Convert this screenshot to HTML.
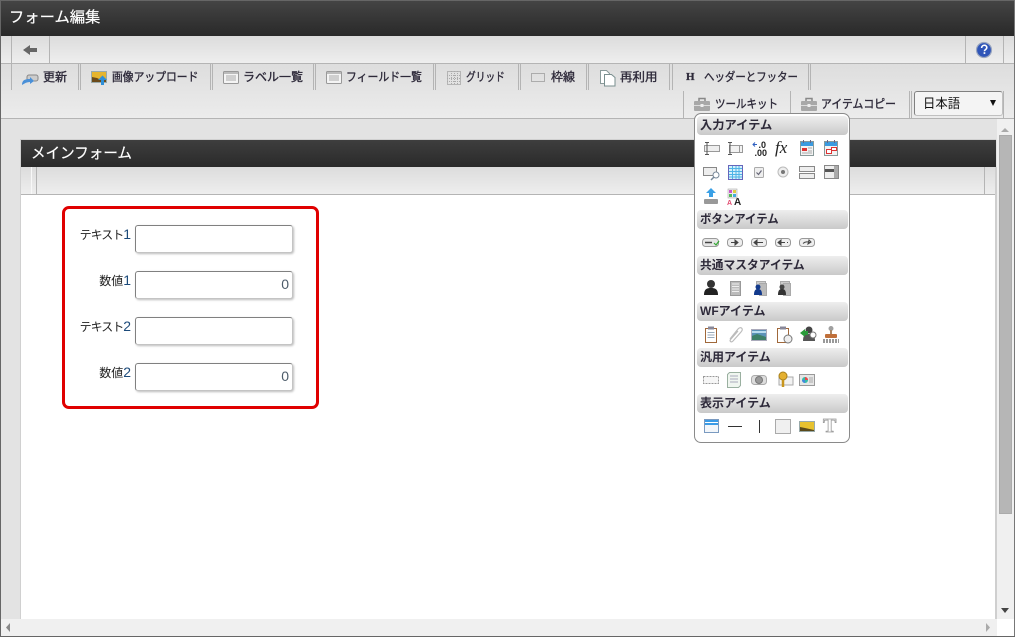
<!DOCTYPE html>
<html lang="ja"><head><meta charset="utf-8"><title>フォーム編集</title>
<style>
html,body{margin:0;padding:0;width:1015px;height:637px;overflow:hidden;background:#e3e3e3}
body{position:relative;font-family:"Liberation Sans","Noto Sans CJK JP",sans-serif}
div,span,svg{position:absolute;box-sizing:border-box}
.b{background:#b4b4b4}
.w{background:#f8f8f8}
.t{font-size:12px;line-height:16px;color:#2e2a3a;white-space:nowrap;transform-origin:0 50%;-webkit-text-stroke:.35px #2e2a3a}
.h{left:697px;width:151px;height:19px;background:linear-gradient(#eeeeee,#c9c9c9);border-radius:4px}
.h span{left:3px;top:1px;font-size:12px;line-height:17px;font-weight:bold;color:#2e2a3a;white-space:nowrap;transform-origin:0 50%}
.l{width:70px;left:61px;text-align:right;font-size:12px;line-height:16px;color:#222;white-space:nowrap}
.l i{font-style:normal;position:static;letter-spacing:-1px}
.l b{font-weight:normal;color:#1c4a7a;font-size:14px;line-height:16px}
.i{left:135px;width:158px;height:28px;background:#fff;border:1px solid #c4c4c4;border-top-color:#808080;border-left-color:#808080;border-radius:3px;box-shadow:1px 1px 2px #bbb}
.i span{right:3px;top:4px;font-size:14px;line-height:16px;color:#4d5c6a}
</style></head><body>
<!-- title bar -->
<div style="left:0;top:0;width:1015px;height:36px;background:linear-gradient(#444,#292929);border-top:1px solid #666"></div>
<span style="left:9px;top:8px;font-size:15px;line-height:20px;color:#fff;white-space:nowrap;transform:scaleX(1.02);transform-origin:0 50%;-webkit-text-stroke:.2px #fff">フォーム編集</span>
<!-- toolbar row -->
<div style="left:0;top:36px;width:1015px;height:27px;background:linear-gradient(#dcdcdc,#eeeeee)"></div>
<div style="left:0;top:63px;width:1015px;height:56px;background:linear-gradient(#dddddd,#ececec)"></div>
<div class="b" style="left:0;top:63px;width:1015px;height:1px"></div>
<div class="b" style="left:0;top:118px;width:1015px;height:1px"></div>
<div class="b" style="left:11px;top:36px;width:1px;height:27px"></div>
<div class="b" style="left:49px;top:36px;width:1px;height:27px"></div>
<div class="b" style="left:965px;top:36px;width:1px;height:27px"></div>
<div class="b" style="left:1003px;top:36px;width:1px;height:27px"></div>
<!-- tab separators row 1 -->
<div class="b" style="left:11px;top:64px;width:1px;height:26px"></div>
<div class="b" style="left:78px;top:64px;width:1px;height:26px"></div><div class="b" style="left:80px;top:64px;width:1px;height:26px"></div>
<div class="b" style="left:210px;top:64px;width:1px;height:26px"></div><div class="b" style="left:212px;top:64px;width:1px;height:26px"></div>
<div class="b" style="left:313px;top:64px;width:1px;height:26px"></div><div class="b" style="left:315px;top:64px;width:1px;height:26px"></div>
<div class="b" style="left:433px;top:64px;width:1px;height:26px"></div><div class="b" style="left:435px;top:64px;width:1px;height:26px"></div>
<div class="b" style="left:518px;top:64px;width:1px;height:26px"></div><div class="b" style="left:520px;top:64px;width:1px;height:26px"></div>
<div class="b" style="left:586px;top:64px;width:1px;height:26px"></div><div class="b" style="left:588px;top:64px;width:1px;height:26px"></div>
<div class="b" style="left:669px;top:64px;width:1px;height:26px"></div><div class="b" style="left:672px;top:64px;width:1px;height:26px"></div>
<div class="b" style="left:808px;top:64px;width:1px;height:26px"></div><div class="b" style="left:810px;top:64px;width:1px;height:26px"></div>
<!-- row 2 separators -->
<div class="b" style="left:683px;top:91px;width:1px;height:27px"></div>
<div class="b" style="left:790px;top:91px;width:1px;height:27px"></div>
<div class="b" style="left:909px;top:91px;width:1px;height:27px"></div><div class="b" style="left:911px;top:91px;width:1px;height:27px"></div>
<div class="b" style="left:1003px;top:91px;width:1px;height:27px"></div>
<!-- toolbar labels -->
<span class="t" style="left:43px;top:69px">更新</span>
<span class="t" style="left:112px;top:69px;transform:scaleX(.9)">画像アップロード</span>
<span class="t" style="left:243px;top:69px">ラベル一覧</span>
<span class="t" style="left:346px;top:69px;transform:scaleX(.905)">フィールド一覧</span>
<span class="t" style="left:466px;top:69px;transform:scaleX(.81)">グリッド</span>
<span class="t" style="left:551px;top:69px">枠線</span>
<span class="t" style="left:620px;top:69px;transform:scaleX(1.04)">再利用</span>
<span class="t" style="left:686px;top:69px;font-family:'Liberation Serif',serif;font-weight:bold;font-size:11px">H</span>
<span class="t" style="left:704px;top:69px;transform:scaleX(.87)">ヘッダーとフッター</span>
<span class="t" style="left:715px;top:96px;transform:scaleX(.875)">ツールキット</span>
<span class="t" style="left:821px;top:96px;transform:scaleX(.905)">アイテムコピー</span>
<!-- language select -->
<div style="left:914px;top:91px;width:89px;height:25px;background:#f4f4f4;border:1px solid #c0c0c0;border-top-color:#808080;border-left-color:#808080;border-radius:3px"></div>
<span style="left:923px;top:94px;font-size:13px;line-height:18px;color:#111;white-space:nowrap;font-family:'Noto Sans CJK JP',sans-serif;transform:scaleX(.95);transform-origin:0 50%">日本語</span>
<!-- content panel -->
<div style="left:0;top:119px;width:997px;height:500px;background:#e3e3e3"></div>
<div style="left:20px;top:139px;width:976px;height:1px;background:#d0d0d0"></div>
<div style="left:20px;top:139px;width:1px;height:480px;background:#d0d0d0"></div>
<div style="left:21px;top:140px;width:975px;height:27px;background:linear-gradient(#3e3e3e,#2a2a2a)"></div>
<span style="left:31px;top:144px;font-size:15px;line-height:20px;color:#fff;white-space:nowrap;transform:scaleX(.97);transform-origin:0 50%;-webkit-text-stroke:.2px #fff">メインフォーム</span>
<div style="left:21px;top:167px;width:975px;height:27px;background:linear-gradient(#dcdcdc,#eeeeee)"></div>
<div class="w" style="left:31px;top:167px;width:1px;height:27px"></div>
<div class="b" style="left:36px;top:167px;width:1px;height:27px"></div>
<div class="b" style="left:984px;top:167px;width:1px;height:27px"></div>
<div class="b" style="left:21px;top:194px;width:975px;height:1px"></div>
<div style="left:21px;top:195px;width:974px;height:424px;background:#fff"></div>
<div style="left:995px;top:167px;width:2px;height:452px;background:#cfcfcf"></div>
<!-- red form box -->
<div style="left:62px;top:206px;width:257px;height:203px;border:3px solid #e00000;border-radius:7px"></div>
<span class="l" style="top:226px"><i>テキスト</i><b>1</b></span>
<span class="l" style="top:272px">数値<b>1</b></span>
<span class="l" style="top:318px"><i>テキスト</i><b>2</b></span>
<span class="l" style="top:364px">数値<b>2</b></span>
<div class="i" style="top:225px"></div>
<div class="i" style="top:271px"><span>0</span></div>
<div class="i" style="top:317px"></div>
<div class="i" style="top:363px"><span>0</span></div>
<!-- scrollbars -->
<div style="left:997px;top:119px;width:18px;height:500px;background:#f0f0f0"></div>
<div style="left:999px;top:135px;width:13px;height:379px;background:#b6b6b6;border:1px solid #ababab"></div>
<div style="left:0;top:619px;width:997px;height:17px;background:#f0f0f0"></div>
<div style="left:997px;top:619px;width:18px;height:17px;background:#fff"></div>
<!-- frame -->
<div style="left:0;top:0;width:1px;height:637px;background:#666"></div>
<div style="left:1014px;top:0;width:1px;height:637px;background:#777"></div>
<div style="left:0;top:636px;width:1015px;height:1px;background:#666"></div>
<!-- palette -->
<div style="left:694px;top:113px;width:156px;height:330px;background:#fff;border:1px solid #8a8a8a;border-radius:7px"></div>
<div class="h" style="top:116px"><span style="transform:scaleX(1.02)">入力アイテム</span></div>
<div class="h" style="top:210px"><span style="transform:scaleX(.95)">ボタンアイテム</span></div>
<div class="h" style="top:256px"><span style="transform:scaleX(.98)">共通マスタアイテム</span></div>
<div class="h" style="top:302px"><span>WFアイテム</span></div>
<div class="h" style="top:348px"><span>汎用アイテム</span></div>
<div class="h" style="top:394px"><span>表示アイテム</span></div>
<span style="left:775px;top:138px;font:italic 17px/20px 'Liberation Serif',serif;color:#222;white-space:nowrap">fx</span>
<span style="left:823px;top:416px;font:bold 20px/20px 'Liberation Serif',serif;color:#fff;-webkit-text-stroke:.8px #999">T</span>
<span style="left:752px;top:141px;font:bold 9px/8px 'Liberation Sans',sans-serif;color:#222;white-space:pre;text-align:right;width:14px">.0</span>
<span style="left:752px;top:149px;font:bold 9px/8px 'Liberation Sans',sans-serif;color:#222;text-align:right;width:15px">.00</span>
<span style="left:734px;top:198px;font:bold 10px/10px 'Liberation Sans',sans-serif;color:#222">A</span>
<span style="left:727px;top:200px;font:bold 7px/8px 'Liberation Sans',sans-serif;color:#e24b70">A</span>
<!-- icons -->
<svg style="left:0;top:0" width="1015" height="637" viewBox="0 0 1015 637" fill="none">
<!-- back arrow -->
<path d="M23 50l7-5v3h7v4h-7v3z" fill="#666"/>
<!-- help -->
<circle cx="984" cy="50" r="7.5" fill="#2f55b8" stroke="#9aa6bf" stroke-width="1.2"/>
<path d="M981.6 48c.2-3.6 5.2-3.6 5.2-.4 0 2-2.4 2-2.4 3.6" stroke="#fff" stroke-width="1.6"/><rect x="983.6" y="52.2" width="1.7" height="1.7" fill="#fff"/>
<!-- update -->
<rect x="27" y="75" width="11" height="6" rx="2" fill="#ccc" stroke="#888"/>
<path d="M22 85c0-5 3-6 8-6v-2l4 4-4 3v-2c-3 0-5 1-8 3z" fill="#4a90d8"/>
<!-- image upload -->
<rect x="91.500" y="71.500" width="15" height="11" fill="#e5b52e" stroke="#9aa"/><path d="M92 77l5 1 4 2 5 0v2H92z" fill="#6b4a1a"/>
<path d="M101 85v-5h-3l4.500-4.500L107 80h-3v5z" fill="#2d8fd8"/>
<!-- list icons -->
<rect x="223.500" y="71.500" width="15" height="12" rx="1" fill="#f4f4f4" stroke="#999"/><rect x="224" y="72" width="14" height="2" fill="#bbb"/><path d="M226 76h10M226 78h10M226 80h10" stroke="#aaa"/>
<rect x="326.500" y="71.500" width="15" height="12" rx="1" fill="#f4f4f4" stroke="#999"/><rect x="327" y="72" width="14" height="2" fill="#bbb"/><path d="M329 76h10M329 78h10M329 80h10" stroke="#aaa"/>
<!-- grid -->
<rect x="447.500" y="71.500" width="13" height="13" stroke="#888" stroke-dasharray="1 1"/><path d="M447 75.500h14M447 78.500h14M447 81.500h14M451.500 71v14M454.500 71v14M457.500 71v14" stroke="#aaa" stroke-dasharray="1 1"/>
<!-- border -->
<rect x="531.500" y="73.500" width="13" height="8" stroke="#777" stroke-dasharray="1 1"/>
<!-- reuse -->
<path d="M600.500 70.500h6l3 3v10h-9z" fill="#fff" stroke="#8a9a9a"/><path d="M604.500 74.500h7l3.500 3v8.500h-10.500z" fill="#fff" stroke="#7a8f8f"/>
<!-- toolboxes -->
<rect x="694" y="101" width="16" height="10" rx="1" fill="#a8a8a8"/><rect x="694" y="105" width="16" height="1" fill="#ddd"/><path d="M699 101v-2.500h6V101" stroke="#888" stroke-width="1.500"/><rect x="700.500" y="104" width="3" height="3" fill="#eee"/>
<rect x="801" y="101" width="16" height="10" rx="1" fill="#a8a8a8"/><rect x="801" y="105" width="16" height="1" fill="#ddd"/><path d="M806 101v-2.500h6V101" stroke="#888" stroke-width="1.500"/><rect x="807.500" y="104" width="3" height="3" fill="#eee"/>
<!-- select arrow -->
<path d="M990 100h6l-3 6z" fill="#111"/>
<!-- scroll arrows -->
<path d="M1001 132l4-4 4 4z" fill="#aaa"/>
<path d="M1001 608h8l-4 5z" fill="#444"/>
<path d="M986 623v9l4-4.500z" fill="#aaa"/>
<path d="M10 623v9l-4-4.500z" fill="#888"/>
<!-- row 1 -->
<rect x="704.500" y="145.500" width="15" height="6" fill="#eee" stroke="#999"/><path d="M705 142.500h4M705 154.500h4M707 142.500v12" stroke="#555"/>
<rect x="729.500" y="145.500" width="13" height="7" fill="#f2f2f2" stroke="#999"/><path d="M728 142.500h4M728 154.500h4M730 142.500v12" stroke="#555"/><path d="M739.500 145v8" stroke="#999"/>
<path d="M753 144.500h4M755 142.500l-2 2 2 2" stroke="#2e5fc0"/>
<rect x="800.500" y="141.500" width="13" height="14" fill="#f3f3f3" stroke="#8a9a9a"/><rect x="801" y="142" width="12" height="4" fill="#3a9be0"/><path d="M803.500 140v3M810.500 140v3" stroke="#668"/><rect x="802" y="148" width="5" height="3" fill="#d33"/><path d="M808 148h4M808 151h4M802 153h10" stroke="#aaa"/>
<rect x="824.500" y="141.500" width="13" height="14" fill="#f3f3f3" stroke="#8a9a9a"/><rect x="825" y="142" width="12" height="4" fill="#3a9be0"/><path d="M827.500 140v3M834.500 140v3" stroke="#668"/><path d="M826.500 149.500h5v4h-5zM831.500 147.500h5v3h-5z" stroke="#d33" fill="#fff"/>
<!-- row 2 -->
<rect x="703.500" y="167.500" width="13" height="8" fill="#eee" stroke="#888"/><circle cx="716" cy="175" r="3" fill="#fff" stroke="#789"/><path d="M714 177l-3 3" stroke="#789" stroke-width="1.500"/>
<rect x="728.500" y="165.500" width="14" height="14" fill="#d6f0fb" stroke="#66b"/><path d="M729 168.500h13M729 171.500h13M729 174.500h13M729 177h13M732.500 166v13M736 166v13M739 166v13" stroke="#4fb4e6"/>
<rect x="754.500" y="167.500" width="9" height="10" rx="1" fill="#eee" stroke="#aaa"/><path d="M756.500 172.500l2 2 3-4" stroke="#667" stroke-width="1.200"/>
<circle cx="783" cy="172" r="5" fill="#eee" stroke="#bbb"/><circle cx="783" cy="172" r="2" fill="#777"/>
<rect x="799.500" y="166.500" width="15" height="5" fill="#eee" stroke="#888"/><rect x="799.500" y="173.500" width="15" height="5" fill="#eee" stroke="#888"/>
<rect x="824.500" y="165.500" width="14" height="13" fill="#eee" stroke="#888"/><rect x="825" y="169" width="9" height="3" fill="#555"/><rect x="834" y="166" width="4" height="12" fill="#aaa"/>
<!-- row 3 -->
<path d="M711 188l5 5h-3v4h-4v-4h-3z" fill="#3aa0e6"/><rect x="704" y="199" width="14" height="5" rx="1" fill="#999"/>
<rect x="728" y="189" width="9" height="9" fill="#eee" stroke="#aaa" stroke-width=".6"/><rect x="729" y="190" width="3" height="3" fill="#c5c"/><rect x="733" y="190" width="3" height="3" fill="#dc4"/><rect x="729" y="194" width="3" height="3" fill="#5b5"/><rect x="733" y="194" width="3" height="3" fill="#4ad"/>
<!-- buttons -->
<rect x="702.500" y="238.500" width="16" height="8" rx="3" fill="#e6e6e6" stroke="#999"/><path d="M705 242.500h7" stroke="#444" stroke-width="1.500"/><path d="M714 243l2 2 3-4" stroke="#3a3" stroke-width="1.200"/>
<rect x="727.500" y="238.500" width="15" height="8" rx="3" fill="#eee" stroke="#999"/><path d="M731 242.500h6M735 240l3 2.500-3 2.500z" stroke="#444" fill="#444"/>
<rect x="751.500" y="238.500" width="15" height="8" rx="3" fill="#eee" stroke="#999"/><path d="M756 242.500h7M757 240l-3 2.500 3 2.500z" stroke="#444" fill="#444"/>
<rect x="775.500" y="238.500" width="15" height="8" rx="3" fill="#eee" stroke="#999"/><path d="M780 242.500h5M781 240l-3 2.500 3 2.500zM787 242.500h1" stroke="#444" fill="#444"/>
<rect x="799.500" y="238.500" width="15" height="8" rx="3" fill="#eee" stroke="#999"/><path d="M803 243.500c2-2 5-2 7-1M809 240l2 2-3 2z" stroke="#444" fill="none"/>
<!-- master -->
<circle cx="711" cy="284" r="4" fill="#333"/><path d="M704 295c0-6 3-7 7-7s7 1 7 7z" fill="#222"/>
<rect x="730.500" y="281.500" width="10" height="14" fill="#bbb" stroke="#999"/><path d="M732 284h7M732 286.500h7M732 289h7M732 291.500h7" stroke="#eee"/>
<rect x="756.500" y="281.500" width="9" height="13" fill="#ccc" stroke="#aaa"/><rect x="759.500" y="283.500" width="7" height="12" fill="#bbb" stroke="#aaa"/><circle cx="758" cy="287" r="2.500" fill="#123a8c"/><path d="M754 295c0-4 1-6 4-6s4 2 4 6z" fill="#123a8c"/>
<rect x="780.500" y="281.500" width="9" height="13" fill="#ccc" stroke="#aaa"/><rect x="783.500" y="283.500" width="7" height="12" fill="#bbb" stroke="#aaa"/><circle cx="782" cy="287" r="2.500" fill="#444"/><path d="M778 295c0-4 1-6 4-6s4 2 4 6z" fill="#333"/>
<!-- WF -->
<rect x="705.500" y="328.500" width="11" height="14" fill="#fff" stroke="#a0683a"/><rect x="708" y="326.500" width="6" height="3" fill="#889"/><path d="M707.500 332.500h7M707.500 335h7M707.500 337.500h7" stroke="#9ab"/>
<path d="M730 339l8-10c3-3 6 0 3 3l-8 9c-2 2-4 0-2-2l7-8" stroke="#bbb" stroke-width="1.200"/>
<rect x="751.500" y="329.500" width="15" height="11" fill="#5b93b8" stroke="#aab"/><path d="M752 336l5-2 9 3v3h-14z" fill="#3d8068"/><path d="M752 331h14v2h-14z" fill="#b9dcef"/>
<rect x="777.500" y="328.500" width="11" height="14" fill="#fff" stroke="#a0683a"/><rect x="780" y="326.500" width="6" height="3" fill="#889"/><circle cx="788" cy="339" r="4" fill="#eee" stroke="#777"/>
<circle cx="809" cy="330" r="3.500" fill="#444"/><path d="M803 341c0-6 2-7 6-7s6 1 6 7z" fill="#555"/><path d="M800 333l5-4v2h3v4h-3v2z" fill="#2a9a3a"/><circle cx="813" cy="335" r="3" fill="#fff" stroke="#777"/>
<circle cx="831" cy="328.500" r="2.500" fill="#a0a0a0"/><rect x="830" y="330" width="2" height="4" fill="#a86"/><rect x="825" y="334" width="12" height="4" rx="1" fill="#c0703a"/><path d="M823 340h16M823 342h16" stroke="#333" stroke-dasharray="2 1"/>
<!-- general -->
<rect x="703.500" y="376.500" width="15" height="7" stroke="#999" stroke-dasharray="2 1" fill="#f6f6f6"/>
<path d="M729.500 372.500h11v13l-2 2h-11v-13z" fill="#f0f6f0" stroke="#9ab0a0"/><path d="M730 376h8M730 379h8M730 382h8" stroke="#aab"/>
<rect x="751.500" y="375.500" width="15" height="9" rx="3" fill="#ddd" stroke="#aaa"/><circle cx="759" cy="380" r="3.500" fill="#999" stroke="#777"/>
<rect x="779" y="377" width="14" height="8" fill="#f2f2f2" stroke="#aaa"/><circle cx="783" cy="376" r="4" fill="#e4b030" stroke="#a8801c"/><path d="M783 380v7" stroke="#c8961e" stroke-width="2.500"/>
<rect x="799.500" y="374.500" width="15" height="11" fill="#e6e6e6" stroke="#999"/><circle cx="805" cy="380" r="3" fill="#3ba"/><path d="M805 380v-3a3 3 0 0 1 3 3z" fill="#e44"/><path d="M805 380h-3a3 3 0 0 0 3 3z" fill="#48d"/><path d="M809 378h4M809 380h4M809 382h4" stroke="#aaa"/>
<!-- display -->
<rect x="704.500" y="419.500" width="14" height="13" fill="#f2f6fa" stroke="#7a9ac0"/><rect x="705" y="420" width="13" height="5" fill="#3a9be6"/><path d="M705 422.500h13" stroke="#fff"/>
<path d="M728 426.500h14" stroke="#333"/>
<path d="M759.500 420v13" stroke="#333"/>
<rect x="775.500" y="419.500" width="15" height="14" fill="#f0f0f0" stroke="#aaa"/>
<rect x="799.500" y="421.500" width="15" height="10" fill="#e7c22f" stroke="#9aa"/><path d="M800 427l5 1 9 2v1h-14z" fill="#5a4a1a"/>
</svg>
</body></html>
